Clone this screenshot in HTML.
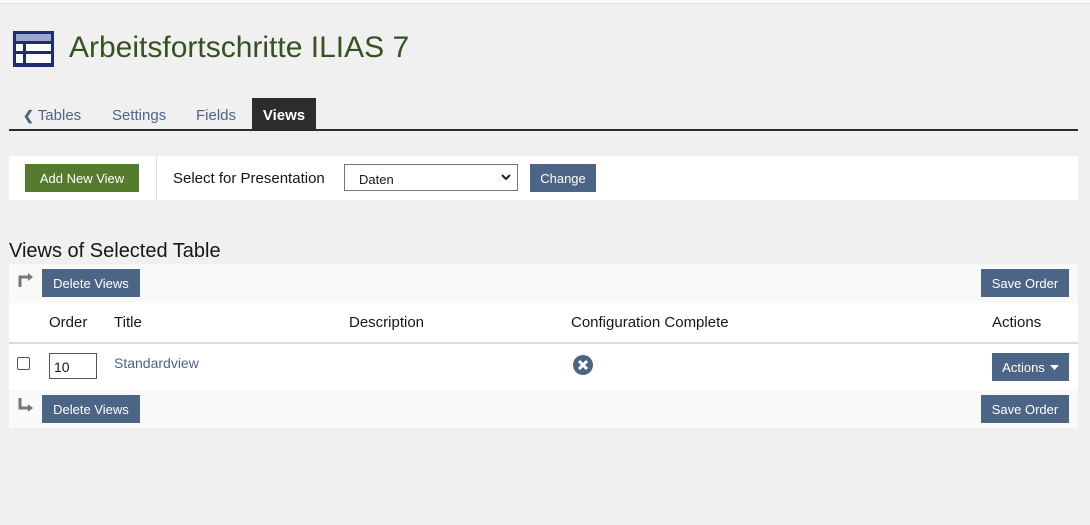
<!DOCTYPE html>
<html><head><meta charset="utf-8"><style>
*{box-sizing:border-box;margin:0;padding:0}
body{width:1090px;height:525px;background:#f0f0f0;font-family:"Liberation Sans",sans-serif;position:relative;overflow:hidden;color:#161616}
.a{position:absolute}
.btn{position:absolute;background:#4c6586;color:#fff;font-size:13px;display:flex;align-items:center;justify-content:center}
.t{position:absolute;font-size:14px;color:#161616}
</style></head><body>
<div class="a" style="left:0;top:0;width:1090px;height:4px;background:#fafafa;border-bottom:1px solid #e2e2e2"></div>
<svg class="a" style="left:13px;top:31px" width="41" height="36" viewBox="0 0 41 36">
<rect x="0" y="0" width="41" height="36" fill="#1e2d6e"/>
<rect x="3" y="3" width="35" height="7" fill="#9aa8cd"/>
<rect x="3" y="13" width="7" height="7" fill="#fff"/><rect x="13" y="13" width="25" height="7" fill="#fff"/>
<rect x="3" y="23" width="7" height="9" fill="#fff"/><rect x="13" y="23" width="25" height="9" fill="#fff"/>
</svg>
<div class="a" style="left:69px;top:31px;font-size:30px;color:#37511f">Arbeitsfortschritte ILIAS 7</div>
<div class="t" style="left:23px;top:107px;color:#4c6586;font-size:15px"><b style="font-size:13px">&#10094;</b> Tables</div>
<div class="t" style="left:112px;top:107px;color:#4c6586;font-size:15px">Settings</div>
<div class="t" style="left:196px;top:107px;color:#4c6586;font-size:15px">Fields</div>
<div class="a" style="left:252px;top:98px;width:64px;height:32px;background:#2c2c2c;color:#fff;font-size:15px;text-align:center;line-height:35px;font-weight:bold">Views</div>
<div class="a" style="left:9px;top:129px;width:1069px;height:2px;background:#2c2c2c"></div>
<div class="a" style="left:9px;top:156px;width:1069px;height:44px;background:#fff"></div>
<div class="a" style="left:156px;top:156px;width:1px;height:44px;background:#e0e0e0"></div>
<div class="btn" style="left:25px;top:164px;width:114px;height:28px;background:#557b2e">Add New View</div>
<div class="t" style="left:173px;top:170px;font-size:15px">Select for Presentation</div>
<div class="a" style="left:344px;top:164px;width:174px;height:27px;border:1px solid #757575;background:#fff;font-size:13px;padding:7px 0 0 14px">Daten<svg style="position:absolute;right:6px;top:9px" width="10" height="7"><path d="M1 1l4 4 4-4" stroke="#222" stroke-width="2" fill="none"/></svg></div>
<div class="btn" style="left:530px;top:164px;width:66px;height:28px">Change</div>
<div class="a" style="left:9px;top:240px;font-size:20px;color:#161616">Views of Selected Table</div>
<div class="a" style="left:9px;top:264px;width:1069px;height:39px;background:#f9f9f9"></div>
<div class="a" style="left:9px;top:303px;width:1069px;height:39px;background:#fff"></div>
<div class="a" style="left:9px;top:342px;width:1069px;height:2px;background:#dcdcdc"></div>
<div class="a" style="left:9px;top:344px;width:1069px;height:46px;background:#fff"></div>
<div class="a" style="left:9px;top:390px;width:1069px;height:38px;background:#f9f9f9"></div>
<svg class="a" style="left:18px;top:272px" width="16" height="16"><path d="M2 15V5h9" stroke="#777" stroke-width="3" fill="none"/><path d="M10 1l5 4-5 4z" fill="#777"/></svg>
<svg class="a" style="left:18px;top:397px" width="16" height="16"><path d="M2 1v10h9" stroke="#777" stroke-width="3" fill="none"/><path d="M10 7l5 4-5 4z" fill="#777"/></svg>
<div class="btn" style="left:42px;top:269px;width:98px;height:28px">Delete Views</div>
<div class="btn" style="left:981px;top:269px;width:88px;height:28px">Save Order</div>
<div class="btn" style="left:42px;top:395px;width:98px;height:28px">Delete Views</div>
<div class="btn" style="left:981px;top:395px;width:88px;height:28px">Save Order</div>
<div class="t" style="left:49px;top:314px;font-size:15px">Order</div>
<div class="t" style="left:114px;top:314px;font-size:15px">Title</div>
<div class="t" style="left:349px;top:314px;font-size:15px">Description</div>
<div class="t" style="left:571px;top:314px;font-size:15px">Configuration Complete</div>
<div class="t" style="left:992px;top:314px;font-size:15px">Actions</div>
<div class="a" style="left:17px;top:357px;width:13px;height:13px;border:1px solid #555;border-radius:2px;background:#fff"></div>
<div class="a" style="left:49px;top:353px;width:48px;height:26px;border:1px solid #555;background:#fff;font-size:14px;padding:5px 0 0 4px">10</div>
<div class="t" style="left:114px;top:355px;color:#4c6586">Standardview</div>
<svg class="a" style="left:572px;top:354px" width="22" height="22" viewBox="0 0 22 22"><circle cx="11" cy="11" r="10" fill="#4c6586"/><path d="M7 7l8 8M15 7l-8 8" stroke="#fff" stroke-width="3"/></svg>
<div class="btn" style="left:992px;top:353px;width:77px;height:28px">Actions<svg style="margin-left:5px" width="9" height="5"><path d="M0 0h9L4.5 5z" fill="#fff"/></svg></div>
</body></html>
